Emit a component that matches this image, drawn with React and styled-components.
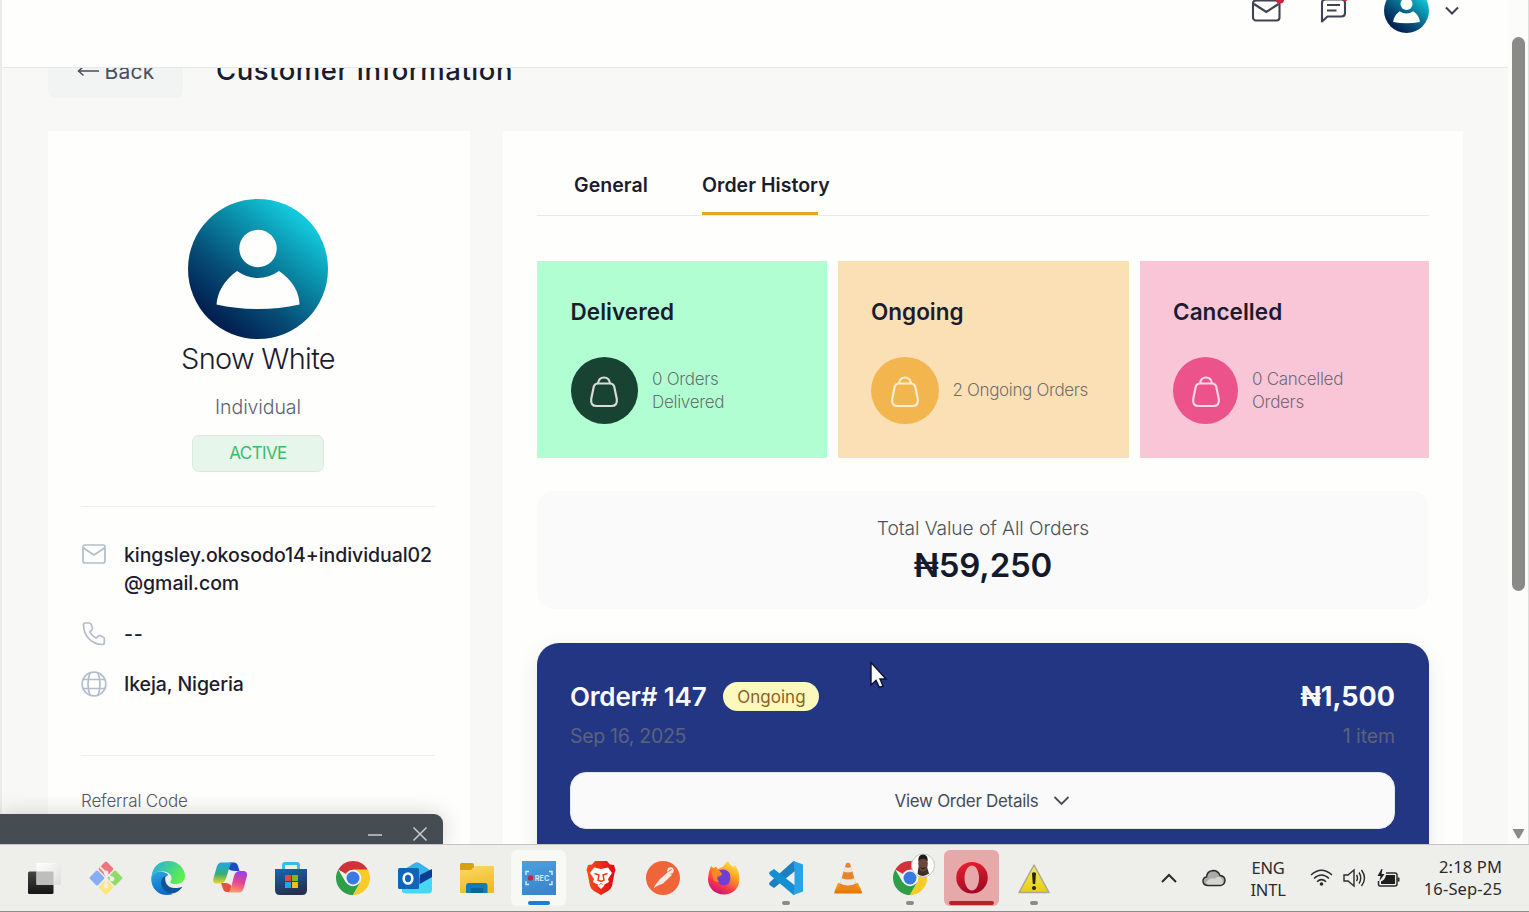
import React from "react";
import styled, { createGlobalStyle } from "styled-components";

const Global = createGlobalStyle`
  * { box-sizing: border-box; }
  body { margin: 0; font-family: Inter, "Noto Sans", sans-serif; color: #1b1c2e; }
  p, h1, h2, h3 { margin: 0; }
  svg { display: block; flex: none; }
`;

const Screen = styled.div`
  position: relative;
  display: flex;
  flex-direction: column;
  width: 1529px;
  height: 912px;
  overflow: hidden;
  background: #fefefc;
`;
const Browser = styled.div`
  display: flex;
  height: 844px;
`;
const Page = styled.div`
  display: flex;
  flex-direction: column;
  width: 1508px;
  border-left: 2px solid #ebebe9;
  background: #f8f8f6;
  overflow: hidden;
`;
const Header = styled.header`
  flex: none;
  display: flex;
  justify-content: flex-end;
  height: 68px;
  padding-right: 48px;
  background: #fefefc;
  border-bottom: 1px solid #e7e8ec;
  overflow: hidden;
`;
const HeaderTools = styled.div`
  display: flex;
  align-items: center;
  height: 44px;
  margin-top: -11px;
`;
const ToolSlot = styled.div`
  margin-right: ${(p) => p.$gap}px;
  margin-bottom: ${(p) => p.$lift || 0}px;
`;
const Main = styled.main`
  flex: 1;
  min-height: 0;
  padding: 0 45px 0 46px;
  overflow: hidden;
`;
const TitleRow = styled.div`
  display: flex;
  align-items: center;
  gap: 33px;
  height: 56px;
  margin: -26px 0 33px;
`;
const BackButton = styled.button`
  display: flex;
  align-items: center;
  justify-content: center;
  gap: 5px;
  width: 135px;
  height: 56px;
  padding-top: 3px;
  border: 0;
  border-radius: 7px;
  background: #f2f3f3;
  color: #4a4e5e;
  font: 400 21px Inter, sans-serif;
  letter-spacing: ${(p) => p.$ls}px;
`;
const Title = styled.h1`
  font-size: 27.5px;
  font-weight: 500;
  letter-spacing: ${(p) => p.$ls}px;
  white-space: nowrap;
`;
const Columns = styled.div`
  display: flex;
  gap: 33px;
`;
const ProfileCard = styled.section`
  display: flex;
  flex-direction: column;
  align-items: center;
  width: 422px;
  height: 800px;
  padding: 68px 35px 0 33px;
  background: #fefefc;
`;
const Name = styled.h2`
  height: 40px;
  line-height: 40px;
  font-size: 29px;
  font-weight: 300;
  letter-spacing: ${(p) => p.$ls}px;
`;
const Kind = styled.p`
  margin-top: 14px;
  line-height: 28px;
  font-size: 19.5px;
  font-weight: 300;
  color: #5d6270;
  letter-spacing: ${(p) => p.$ls}px;
`;
const Status = styled.div`
  display: flex;
  align-items: center;
  justify-content: center;
  width: 132px;
  height: 37px;
  margin-top: 14px;
  padding-bottom: 1px;
  border: 1px solid #dfe7df;
  border-radius: 7px;
  background: #e6f6eb;
  color: #3dbb6e;
  font-size: 17px;
  font-weight: 400;
  letter-spacing: ${(p) => p.$ls}px;
`;
const Divider = styled.hr`
  width: 100%;
  height: 1px;
  margin: ${(p) => p.$top}px 0 0;
  border: 0;
  background: #eeeff0;
`;
const Contact = styled.div`
  display: flex;
  width: 100%;
  gap: 17px;
  margin-top: ${(p) => p.$top}px;
`;
const ContactIcon = styled.div`
  display: flex;
  align-items: center;
  width: 26px;
  height: 28px;
  margin-top: ${(p) => p.$top || 0}px;
`;
const ContactText = styled.p`
  line-height: 28px;
  font-size: 19.5px;
  font-weight: 500;
  letter-spacing: ${(p) => p.$ls}px;
  white-space: nowrap;
`;
const Referral = styled.p`
  align-self: flex-start;
  margin-top: 32px;
  line-height: 26px;
  font-size: 17px;
  font-weight: 300;
  color: #555963;
  letter-spacing: ${(p) => p.$ls}px;
`;
const OrdersCard = styled.section`
  width: 960px;
  height: 800px;
  padding: 29px 34px 0;
  background: #fefefc;
`;
const Tabs = styled.nav`
  display: flex;
  gap: 12px;
  height: 56px;
  padding-left: 37px;
  border-bottom: 1px solid #e9eaea;
`;
const Tab = styled.div`
  width: 116px;
  height: 55px;
  line-height: 51px;
  font-size: 19.5px;
  font-weight: 600;
  letter-spacing: ${(p) => p.$ls}px;
  white-space: nowrap;
  border-bottom: 3px solid ${(p) => (p.$active ? "#e3a61f" : "transparent")};
`;
const Stats = styled.div`
  display: flex;
  gap: 11px;
  margin-top: 45px;
`;
const Stat = styled.article`
  width: ${(p) => p.$w}px;
  height: 197px;
  padding: 36px 0 0 33.5px;
  background: ${(p) => p.$bg};
`;
const StatTitle = styled.h3`
  line-height: 30px;
  font-size: 22.5px;
  font-weight: 600;
  letter-spacing: ${(p) => p.$ls}px;
`;
const StatBody = styled.div`
  display: flex;
  align-items: center;
  gap: 14px;
  margin-top: 30px;
`;
const BagDisc = styled.div`
  display: flex;
  align-items: center;
  justify-content: center;
  width: ${(p) => p.$w}px;
  height: 67px;
  padding-top: 2px;
  border-radius: 50%;
  background: ${(p) => p.$bg};
`;
const StatText = styled.p`
  line-height: 22.5px;
  font-size: 17px;
  font-weight: 300;
  color: #4b4f57cc;
  letter-spacing: ${(p) => p.$ls}px;
  white-space: pre-line;
`;
const Total = styled.div`
  display: flex;
  flex-direction: column;
  align-items: center;
  height: 118px;
  margin-top: 33px;
  padding-top: 23px;
  border-radius: 17px;
  background: #fafafb;
`;
const TotalLabel = styled.p`
  line-height: 28px;
  font-size: 19.2px;
  font-weight: 300;
  color: #4c525c;
  letter-spacing: ${(p) => p.$ls}px;
`;
const TotalValue = styled.p`
  line-height: 46px;
  font-size: 33px;
  font-weight: 600;
  color: #141a2b;
  letter-spacing: ${(p) => p.$ls}px;
`;
const Order = styled.article`
  height: 300px;
  margin-top: 34px;
  padding: 34px 34px 0 33px;
  border-radius: 22px;
  background: #233684;
  box-shadow: 0 6px 20px rgba(60, 60, 60, 0.1);
`;
const OrderRow = styled.div`
  display: flex;
  align-items: center;
  height: ${(p) => p.$h}px;
`;
const OrderName = styled.h3`
  font-size: 26px;
  font-weight: 600;
  color: #fafafd;
  letter-spacing: ${(p) => p.$ls}px;
`;
const Pill = styled.span`
  display: flex;
  align-items: center;
  justify-content: center;
  width: 96px;
  height: 29px;
  margin-left: 17px;
  border-radius: 15px;
  background: #fcf8be;
  color: #8a6420;
  font-size: 17px;
  letter-spacing: ${(p) => p.$ls}px;
`;
const Price = styled.span`
  margin-left: auto;
  color: #fafafd;
  font-size: 27px;
  font-weight: 700;
  letter-spacing: ${(p) => p.$ls}px;
`;
const Muted = styled.span`
  margin-left: ${(p) => (p.$end ? "auto" : 0)};
  color: #5a627c;
  font-size: 19.5px;
  font-weight: 400;
  letter-spacing: ${(p) => p.$ls}px;
`;
const DetailsButton = styled.button`
  display: flex;
  align-items: center;
  justify-content: center;
  gap: 15px;
  width: 100%;
  height: 57px;
  margin-top: 16px;
  border: 1px solid #e5e7ef;
  border-radius: 16px;
  background: #fafafb;
  color: #474b55;
  font: 400 17px Inter, sans-serif;
  letter-spacing: ${(p) => p.$ls}px;
`;
const Scrollbar = styled.div`
  display: flex;
  flex-direction: column;
  align-items: center;
  width: 21px;
  padding: 37px 0 5px;
  background: #fcfcfa;
  border-right: 1px solid #dededc;
`;
const Thumb = styled.div`
  width: 13px;
  height: 554px;
  margin-bottom: auto;
  border-radius: 7px;
  background: #8a8b86;
`;
const Popup = styled.div`
  position: absolute;
  left: 0;
  top: 814px;
  display: flex;
  justify-content: flex-end;
  width: 443px;
  height: 30px;
  padding: 12px 15px 0 0;
  gap: 29px;
  border-top-right-radius: 9px;
  background: #454d52;
  box-shadow: 0 0 22px rgba(0, 0, 0, 0.18);
`;
const Cursor = styled.svg`
  position: absolute;
  left: 868px;
  top: 660px;
`;
const Taskbar = styled.footer`
  position: relative;
  display: flex;
  height: 68px;
  padding-left: 13px;
  border-top: 1px solid #c3c3c1;
  border-bottom: 1px solid #8b8b88;
  background: #eeeeeb;
`;
const Slot = styled.div`
  display: flex;
  flex-direction: column;
  align-items: center;
  width: 61.87px;
  padding-top: 5px;
`;
const Tile = styled.div`
  display: flex;
  flex-direction: column;
  align-items: center;
  justify-content: space-between;
  width: 55px;
  height: 56px;
  padding: 11px 0 1px;
  border-radius: 6px;
  background: ${(p) => p.$bg || "transparent"};
`;
const Mark = styled.div`
  width: ${(p) => p.$w}px;
  height: 4px;
  border-radius: 2px;
  background: ${(p) => p.$c};
`;
const Tray = styled.div`
  display: flex;
  align-items: center;
  margin-left: auto;
  padding: 0 27px 0 0;
  height: 66px;
  color: #2b2b2b;
  font-family: "Noto Sans", sans-serif;
  font-size: 16.5px;
  line-height: 22.5px;
`;
const TrayItem = styled.div`
  width: ${(p) => p.$w}px;
  margin-right: ${(p) => p.$gap}px;
  padding-top: ${(p) => p.$drop || 0}px;
  text-align: ${(p) => p.$align || "center"};
  letter-spacing: ${(p) => p.$ls || 0}px;
  white-space: nowrap;
`;

const Avatar = ({ size, id }) => (
  <svg width={size} height={size} viewBox="0 0 140 140">
    <defs>
      <linearGradient id={id} x1="0.2" y1="0.87" x2="0.8" y2="0.13">
        <stop offset="0" stopColor="#021f50" />
        <stop offset="0.35" stopColor="#065079" />
        <stop offset="0.75" stopColor="#0b9ab3" />
        <stop offset="1" stopColor="#14c8dc" />
      </linearGradient>
    </defs>
    <circle cx="70" cy="70" r="70" fill={`url(#${id})`} />
    <circle cx="70" cy="49.500" r="18.700" fill="#fefefc" />
    <path d="M49 72Q59 79 70 79T91 72Q111 86 111.500 105.500Q91 110 70 110T28.500 105.500Q30 86 49 72Z" fill="#fefefc" />
  </svg>
);

const Bag = ({ color }) => (
  <svg width="30" height="34" viewBox="0 0 30 34" fill="none" stroke={color} strokeWidth="2.2">
    <path d="M9 8.500H21Q24.300 8.500 25.200 11.500L27.800 24Q28.600 31 22.500 31H7.500Q1.400 31 2.200 24L4.800 11.500Q5.700 8.500 9 8.500Z" />
    <path d="M9 8.500C9.500 4.500 12 2.500 15 2.500S20.500 4.500 21 8.500" />
  </svg>
);

const ChromeIcon = () => (
  <>
    <path d="M17 17L2.300 8.500A17 17 0 0 1 31.700 8.500Z" fill="#d3303a" />
    <path d="M2.300 8.500A17 17 0 0 0 17 34L24.300 21.200L9.700 21.200Z" fill="#2f9e49" />
    <path d="M31.700 8.500A17 17 0 0 1 17 34L24.500 21L17 8.500Z" fill="#f8cb28" />
    <circle cx="17" cy="17" r="8.300" fill="#f5f5f3" />
    <circle cx="17" cy="17" r="6.500" fill="#3a78e3" />
  </>
);

const grad = (id, from, to, x2 = 1, y2 = 1) => (
  <linearGradient id={id} x1="0" y1="0" x2={x2} y2={y2}>
    <stop offset="0" stopColor={from} />
    <stop offset="1" stopColor={to} />
  </linearGradient>
);

const apps = [
  {
    art: (
      <>
        <defs>{grad("tv", "#454545", "#151515", 0)}{grad("tw", "#ffffff", "#dededc", 1)}</defs>
        <rect x="1" y="10.500" width="25.500" height="22.500" rx="1.500" fill="url(#tv)" />
        <rect x="9.500" y="2" width="24.500" height="22" rx="1" fill="url(#tw)" />
        <path d="M9.500 10.500H26.500V24H9.500Z" fill="#bebebc" />
      </>
    ),
  },
  {
    art: (
      <>
        <g transform="rotate(45 17 17)">
          <rect x="5" y="5" width="11.300" height="11.300" rx="1.500" fill="#f07480" />
          <rect x="17.700" y="5" width="11.300" height="11.300" rx="1.500" fill="#90dc68" />
          <rect x="5" y="17.700" width="11.300" height="11.300" rx="1.500" fill="#86aef5" />
          <rect x="17.700" y="17.700" width="11.300" height="11.300" rx="1.500" fill="#fbe680" />
        </g>
        <path d="M11 6L17 12V27M17 12L24 18" stroke="#eeeeeb" strokeWidth="2" fill="none" />
        <circle cx="17" cy="12" r="2.400" fill="#eeeeeb" />
        <circle cx="17" cy="25" r="2.400" fill="#eeeeeb" />
        <circle cx="23" cy="18" r="2.400" fill="#eeeeeb" />
      </>
    ),
  },
  {
    art: (
      <>
        <defs>{grad("eg", "#25a9e8", "#5cf04c", 1, 0.5)}{grad("eb", "#2ba8e4", "#0c6cc4", 0.3)}</defs>
        <path d="M0.500 15C2 5 9 0 17 0C28 0 34 8 34 15C34 21 29 23 24 23C20 23 18.500 21.500 20 19.500C22 16 19 11 13 10.500C7 10 3 12 0.500 15Z" fill="url(#eg)" />
        <path d="M0.300 16C2 12 7 10 12 11C17 12 18 14 16 15C10 17 9 25 16 30C19 32 22 33 22 33C12 37 -1 30 0.300 16Z" fill="url(#eb)" />
        <path d="M14.500 15C8 18 9 26 15 30.500C21 35 28 31 31.500 25.500C26 28 18 28 15 22C14 19 14 17 14.500 15Z" fill="#10539a" />
      </>
    ),
  },
  {
    art: (
      <>
        <defs>
          <linearGradient id="c1" x1="0" y1="0" x2="0" y2="1"><stop offset="0" stopColor="#21a5e8" /><stop offset="0.550" stopColor="#35ae78" /><stop offset="1" stopColor="#f2d41e" /></linearGradient>
          <linearGradient id="c2" x1="0.500" y1="0" x2="0.300" y2="1"><stop offset="0" stopColor="#9b3fe8" /><stop offset="0.500" stopColor="#e64691" /><stop offset="1" stopColor="#f9a065" /></linearGradient>
        </defs>
        <path d="M16 1.500H21Q24 1.500 25 5L26.500 10H22Q18 10 15.500 8Z" fill="#1c49c5" />
        <path d="M8 22H13Q16 22 18.500 25L17 31H14Q11 31 10 28Z" fill="#e6503f" />
        <path d="M8 1.500H20Q17.500 2 16.500 6L13 17.500Q11.500 22.500 7 22.500H3Q-0.300 22 0.300 18L4 5Q5.500 1.500 8 1.500Z" fill="url(#c1)" />
        <path d="M26 31.500H14.500Q17 31 18 27L21 15Q22.500 10 27 10H31Q34.500 10.500 34 14.500L30.500 28Q29 31.500 26 31.500Z" fill="url(#c2)" />
      </>
    ),
  },
  {
    art: (
      <>
        <defs>{grad("st", "#1268b4", "#273052", 0.3)}</defs>
        <path d="M9.500 9V4Q9.500 2.500 11 2.500H23Q24.500 2.500 24.500 4V9" stroke="#35bde6" strokeWidth="2.800" fill="none" />
        <path d="M1 8H33V29Q33 34 28 34H6Q1 34 1 29Z" fill="url(#st)" />
        <rect x="11" y="14" width="6" height="6" fill="#e5492e" />
        <rect x="18" y="14" width="6" height="6" fill="#7dbb1d" />
        <rect x="11" y="21" width="6" height="6" fill="#24a5ea" />
        <rect x="18" y="21" width="6" height="6" fill="#f8bc15" />
      </>
    ),
  },
  { art: <ChromeIcon /> },
  {
    art: (
      <>
        <path d="M4 10L17 2Q19 1 21 2L33 10V29Q33 32 30 32H8Q4 32 4 29Z" fill="#1a8bd4" />
        <path d="M17 2Q19 1 21 2L33 10L22 17L9 7Z" fill="#35b5ea" />
        <path d="M22 14L34 8V17L22 24Z" fill="#0a3f94" />
        <path d="M34 16V29Q34 32.500 30 32.500H8Q4 32 4 28L20 24Z" fill="#45d7f4" />
        <rect x="0" y="7" width="21" height="21" rx="1.500" fill="#0f65b7" />
        <ellipse cx="10" cy="17.500" rx="4.300" ry="5" fill="none" stroke="#f5f8fb" strokeWidth="2.600" />
      </>
    ),
  },
  {
    art: (
      <>
        <defs>{grad("fd", "#fbd967", "#f0bb26", 0.3)}</defs>
        <path d="M0 3.500Q0 2 1.500 2H12Q14 2 14 4V9H0Z" fill="#d4a10f" />
        <path d="M0 9H11L15 5H33Q34 5 34 6.500V31Q34 32 33 32H1Q0 32 0 31Z" fill="url(#fd)" />
        <path d="M6 32V25Q6 22 9 22H25Q27.500 22 27.500 25V32Z" fill="#137bb5" />
        <path d="M11 27H23V32H11Z" fill="#0c6498" />
      </>
    ),
  },
  {
    bg: "#f8f8f5",
    mark: [22, "#1a7fd0"],
    art: (
      <>
        <defs>{grad("rc", "#4ba1e0", "#3b86cc", 0.3)}</defs>
        <rect width="34" height="34" fill="url(#rc)" />
        <path d="M7 10.500H4V14M27 10.500H30V14M7 23.500H4V20M27 23.500H30V20" fill="none" stroke="#d9eaf8" strokeWidth="1.400" />
        <circle cx="8.500" cy="17" r="2.700" fill="#c62640" />
        <text x="12.800" y="19.600" fontSize="7.200" fontWeight="700" fill="#d6e8f7" fontFamily="Inter, sans-serif">REC</text>
      </>
    ),
  },
  {
    art: (
      <>
        <defs>{grad("br", "#f4511e", "#e30613", 1, 0)}</defs>
        <path d="M11 0H23L26 3.500L30 4L31.500 9L30.500 12L28 25Q27 28 24 30L17 34L10 30Q7 28 6 25L3.500 12L2.500 9L4 4L8 3.500Z" fill="url(#br)" />
        <path d="M10 6.500L17 8L24 6.500L28 12L24 18L25 21L19.500 24L17 22L14.500 24L9 21L10 18L6 12Z" fill="#fff" />
        <path d="M13.500 24.500L17 23L20.500 24.500L17 28Z" fill="#fff" />
        <path d="M10.500 12.500L15 14L14 19L17 20.500L20 19L19 14L23.500 12.500" stroke="#ec3b18" strokeWidth="1.500" fill="none" />
      </>
    ),
  },
  {
    art: (
      <>
        <circle cx="17" cy="17" r="17" fill="#f0643a" />
        <circle cx="24.500" cy="9.500" r="3.200" fill="#f8e9e1" />
        <path d="M22 11L26 14L17 22.500L11 25L7.500 27.500L10 23L14 18Z" fill="#f8e9e1" />
        <path d="M22.500 10.500L25.500 8.500" stroke="#f0643a" strokeWidth="1" />
      </>
    ),
  },
  {
    art: (
      <>
        <defs>
          <linearGradient id="ff" x1="0.850" y1="0" x2="0.300" y2="1"><stop offset="0" stopColor="#fff04a" /><stop offset="0.400" stopColor="#ff9c22" /><stop offset="0.750" stopColor="#f8334c" /><stop offset="1" stopColor="#c8107f" /></linearGradient>
        </defs>
        <path d="M4 5L6.500 7L9 5.500L11 8L16 5.500L19 2L21 0Q22 3 26 6L28 4Q33 11 32.500 19C32 28 25 33.500 17 33.500C8 33.500 1 27 1 18Q1 11 4 5Z" fill="url(#ff)" />
        <path d="M12 9Q20 7 23 13Q25 23 18 24.500Q11 24.500 9.500 17L15 14Z" fill="#6e3fd2" />
        <path d="M5 10Q12 7 15 13L10 15Q10 19 12 21Q7 21 6 18Z" fill="#ff8a24" />
      </>
    ),
  },
  {
    mark: [8, "#8b8b88"],
    art: (
      <>
        <path d="M24.500 0L26 1V10L5 27L0.500 24Q-0.500 22.500 1 21Z" fill="#1c7fbe" />
        <path d="M24.500 34L26 33V24.500L5 8L0.500 11Q-0.500 12.500 1 14Z" fill="#148fd3" />
        <path d="M24.500 0L34 3.500V30.500L24.500 34L25.500 24V10Z" fill="#2aa2e8" />
      </>
    ),
  },
  {
    art: (
      <>
        <defs>{grad("vl", "#fba31b", "#e07400", 0)}</defs>
        <path d="M7 22H27L31 31Q31 32.500 30 32.500H4Q3 32.500 3.300 31Z" fill="url(#vl)" />
        <path d="M15 2.500Q17 1 19 2.500L26 26Q17 30 8 26Z" fill="#e8832a" />
        <path d="M14 6L12.700 10.500Q17 12.500 21.300 10.500L20 6Q17 7.500 14 6Z" fill="#e9e9e7" />
        <path d="M10.700 17L9 22.500Q17 26.500 25 22.500L23.300 17Q17 20 10.700 17Z" fill="#e9e9e7" />
      </>
    ),
  },
  {
    mark: [8, "#8b8b88"],
    art: (
      <>
        <ChromeIcon />
        <circle cx="30" cy="4.500" r="11.500" fill="#fbfbfa" stroke="#c6c6c4" />
        <path d="M25.500 6L34 6L36 12.500Q30 17 24.500 13Z" fill="#3c302c" />
        <ellipse cx="30" cy="2.500" rx="4.800" ry="8" fill="#6b463a" />
        <path d="M25.300 0Q25 -6.500 30 -6.500T34.700 0Q30 -4.500 25.300 0Z" fill="#1d1917" />
        <path d="M27.500 6.500Q30 9.500 32.500 6.500" stroke="#261612" fill="none" />
      </>
    ),
  },
  {
    bg: "#e6a8a9",
    mark: [45, "#bd1f26"],
    art: (
      <>
        <defs>{grad("op", "#f0202e", "#a50a25", 0.3)}</defs>
        <path fillRule="evenodd" d="M17 1A15.700 15.700 0 1 0 17 32.500A15.700 15.700 0 1 0 17 1ZM17 4.500C21 4.500 24 10 24 17S21 29.500 17 29.500S9.500 24 9.500 17S13 4.500 17 4.500Z" fill="url(#op)" />
      </>
    ),
  },
  {
    mark: [8, "#8b8b88"],
    art: (
      <>
        <defs>{grad("wn", "#f6ea5a", "#e8cd10", 0)}</defs>
        <path d="M17 4L32 31.500H2Z" fill="url(#wn)" stroke="#a9a795" strokeWidth="1.500" strokeLinejoin="round" />
        <path d="M15 12Q17 10.500 19 12L18.200 23H15.800Z" fill="#23230f" />
        <circle cx="17" cy="27" r="2" fill="#23230f" />
      </>
    ),
  },
];

const stats = [
  { title: "Delivered", text: "0 Orders\nDelivered", bg: "#b2fed3", disc: "#184332", bag: "#d8dbd6", w: 289.5, dw: 67.5, ls: 0.05, tls: -0.3 },
  { title: "Ongoing", text: "2 Ongoing Orders", bg: "#fbe0b5", disc: "#f3b64e", bag: "#fcecd2", w: 291, dw: 67.5, ls: 0, tls: -0.35 },
  { title: "Cancelled", text: "0 Cancelled\nOrders", bg: "#f9c6d7", disc: "#ec538a", bag: "#fbd9e4", w: 289.5, dw: 65, ls: 0.05, tls: -0.3 },
];

export default function App() {
  return (
    <Screen>
      <Global />
      <Browser>
        <Page>
          <Header>
            <HeaderTools>
              <ToolSlot $gap={35}>
                <svg width="34" height="34" viewBox="0 0 34 34" fill="none" stroke="#3f4250" strokeWidth="2.1">
                  <rect x="3" y="6.500" width="26.500" height="20" rx="3" />
                  <path d="M4 10L16.300 18L28.500 10" />
                  <circle cx="30" cy="5" r="4.500" fill="#d81f3c" stroke="none" />
                </svg>
              </ToolSlot>
              <ToolSlot $gap={35}>
                <svg width="30" height="34" viewBox="0 0 30 34" fill="none" stroke="#3f4250" strokeWidth="2.1">
                  <path d="M3 27.500V9Q3 5.500 6.500 5.500H22.500Q26 5.500 26 9V19Q26 22.500 22.500 22.500H8.500Z" strokeLinejoin="round" />
                  <path d="M8 11H21M8 16.500H17.500" />
                  <circle cx="26" cy="2.500" r="4.500" fill="#d81f3c" stroke="none" />
                </svg>
              </ToolSlot>
              <ToolSlot $gap={15} $lift={2}><Avatar size={45} id="avatarSmall" /></ToolSlot>
              <svg width="16" height="12" viewBox="0 0 16 12" fill="none" stroke="#3f4250" strokeWidth="2">
                <path d="M2 2.500L8 8.500L14 2.500" />
              </svg>
            </HeaderTools>
          </Header>
          <Main>
            <TitleRow>
              <BackButton $ls={0.2}>
                <svg width="23" height="14" viewBox="0 0 23 14" fill="none" stroke="#4a4e5e" strokeWidth="1.500">
                  <path d="M22 7H1.500M6.500 2.500L1.500 7L6.500 11.500" />
                </svg>
                Back
              </BackButton>
              <Title $ls={0.52}>Customer Information</Title>
            </TitleRow>
            <Columns>
              <ProfileCard>
                <Avatar size={140} id="avatarLarge" />
                <Name $ls={-0.7}>Snow White</Name>
                <Kind $ls={-0.1}>Individual</Kind>
                <Status $ls={-0.6}>ACTIVE</Status>
                <Divider $top={34} />
                <Contact $top={34}>
                  <ContactIcon $top={-1}>
                    <svg width="26" height="22" viewBox="0 0 26 22" fill="none" stroke="#b3bdcb" strokeWidth="1.700">
                      <rect x="2" y="2" width="22" height="18" rx="2" />
                      <path d="M2.500 5L13 12L23.500 5" />
                    </svg>
                  </ContactIcon>
                  <ContactText $ls={-0.06}>kingsley.okosodo14+individual02<br />@gmail.com</ContactText>
                </Contact>
                <Contact $top={23}>
                  <ContactIcon>
                    <svg width="26" height="26" viewBox="0 0 26 26" fill="none" stroke="#b3bdcb" strokeWidth="1.700" strokeLinejoin="round">
                      <path d="M4 2H8.500Q9.500 2 10 3.200L11.500 7Q11.700 8 11 8.700L8.800 10.800Q11 15 15.200 17.200L17.300 15Q18 14.300 19 14.600L22 16Q23.300 16.500 23.300 17.500V21.500Q23.300 23.500 21.500 23.500C11 23.500 2.500 15 2.500 4Q2.500 2 4 2Z" />
                    </svg>
                  </ContactIcon>
                  <ContactText $ls={0.8}>--</ContactText>
                </Contact>
                <Contact $top={22}>
                  <ContactIcon>
                    <svg width="26" height="26" viewBox="0 0 26 26" fill="none" stroke="#b3bdcb" strokeWidth="1.700">
                      <circle cx="13" cy="13" r="11.800" />
                      <path d="M9 1.500Q5 13 9 24.500M17 1.500Q21 13 17 24.500M1.500 8.500H24.500M1.500 17.500H24.500" />
                    </svg>
                  </ContactIcon>
                  <ContactText $ls={-0.1}>Ikeja, Nigeria</ContactText>
                </Contact>
                <Divider $top={57} />
                <Referral $ls={-0.15}>Referral Code</Referral>
              </ProfileCard>
              <OrdersCard>
                <Tabs>
                  <Tab $ls={0.05}>General</Tab>
                  <Tab $active $ls={0.05}>Order History</Tab>
                </Tabs>
                <Stats>
                  {stats.map((s) => (
                    <Stat key={s.title} $w={s.w} $bg={s.bg}>
                      <StatTitle $ls={s.ls}>{s.title}</StatTitle>
                      <StatBody>
                        <BagDisc $w={s.dw} $bg={s.disc}><Bag color={s.bag} /></BagDisc>
                        <StatText $ls={s.tls}>{s.text}</StatText>
                      </StatBody>
                    </Stat>
                  ))}
                </Stats>
                <Total>
                  <TotalLabel $ls={-0.08}>Total Value of All Orders</TotalLabel>
                  <TotalValue $ls={-0.2}>₦59,250</TotalValue>
                </Total>
                <Order>
                  <OrderRow $h={39}>
                    <OrderName $ls={-0.18}>Order# 147</OrderName>
                    <Pill $ls={0}>Ongoing</Pill>
                    <Price $ls={0}>₦1,500</Price>
                  </OrderRow>
                  <OrderRow $h={40}>
                    <Muted $ls={-0.3}>Sep 16, 2025</Muted>
                    <Muted $end $ls={-0.1}>1 item</Muted>
                  </OrderRow>
                  <DetailsButton $ls={-0.3}>
                    View Order Details
                    <svg width="17" height="12" viewBox="0 0 17 12" fill="none" stroke="#474b55" strokeWidth="1.800">
                      <path d="M1.500 2L8.500 9L15.500 2" />
                    </svg>
                  </DetailsButton>
                </Order>
              </OrdersCard>
            </Columns>
          </Main>
        </Page>
        <Scrollbar>
          <Thumb />
          <svg width="13" height="10" viewBox="0 0 13 10"><path d="M0.500 0H12.500L7.500 9Q6.500 10 5.500 9Z" fill="#8a8b86" /></svg>
        </Scrollbar>
      </Browser>
      <Popup>
        <svg width="16" height="16" viewBox="0 0 16 16" stroke="#c9cccd" strokeWidth="1.500"><path d="M1 9H15" /></svg>
        <svg width="16" height="16" viewBox="0 0 16 16" stroke="#c9cccd" strokeWidth="1.500"><path d="M1.500 1.500L14.500 14.500M14.500 1.500L1.500 14.500" /></svg>
      </Popup>
      <Cursor width="20" height="30" viewBox="0 0 20 30">
        <path d="M3 2.500V25L8 20.500L11.500 27.500L15 26L12 19H18Z" fill="#fdfdfd" stroke="#0d1030" strokeWidth="1.400" />
      </Cursor>
      <Taskbar>
        {apps.map((a, i) => (
          <Slot key={i}>
            <Tile $bg={a.bg}>
              <svg width="34" height="34" viewBox="0 0 34 34" overflow="visible">{a.art}</svg>
              {a.mark && <Mark $w={a.mark[0]} $c={a.mark[1]} />}
            </Tile>
          </Slot>
        ))}
        <Tray>
          <TrayItem $w={16} $gap={25}>
            <svg width="16" height="10" viewBox="0 0 16 10" fill="none" stroke="#2b2b2b" strokeWidth="2"><path d="M1 9L8 2L15 9" /></svg>
          </TrayItem>
          <TrayItem $w={24} $gap={24}>
            <svg width="24" height="18" viewBox="0 0 24 18" fill="#aaaaa9" stroke="#2b2b2b" strokeWidth="1.500">
              <path d="M5.500 16.500Q1 16 1 12Q1 8.500 4.500 8Q5 2 11 1.500Q16 1.500 18 6.500Q23 7 23 11.500Q22.500 16 18.500 16.500Z" />
              <path d="M4 14Q7 8 13 9.500Q17 6 20 10L21 14Q20 15.500 18 15.500H6Z" fill="#d4d4d3" stroke="none" />
            </svg>
          </TrayItem>
          <TrayItem $w={36} $gap={24} $ls={-0.2} $drop={2}>ENG<br />INTL</TrayItem>
          <TrayItem $w={23} $gap={10}>
            <svg width="23" height="18" viewBox="0 0 23 18" fill="none" stroke="#2b2b2b" strokeWidth="1.500">
              <path d="M1 6Q11.500 -3.500 22 6M4 9.500Q11.500 2.500 19 9.500M7 12.800Q11.500 8.500 16 12.800" />
              <circle cx="11.500" cy="15" r="1.800" fill="#2b2b2b" stroke="none" />
            </svg>
          </TrayItem>
          <TrayItem $w={23} $gap={11}>
            <svg width="23" height="20" viewBox="0 0 23 20" fill="none" stroke="#2b2b2b" strokeWidth="1.400">
              <path d="M1 7H5L11 2V18L5 13H1Z" />
              <path d="M13.500 7Q15.500 10 13.500 13M16 4.500Q19.500 10 16 15.500M18.500 2Q24.500 10 18.500 18" />
            </svg>
          </TrayItem>
          <TrayItem $w={23} $gap={23}>
            <svg width="23" height="19" viewBox="0 0 23 19" fill="none" stroke="#2b2b2b" strokeWidth="1.500">
              <path d="M9 4H18Q20 4 20 6V15Q20 17 18 17H3Q1.500 17 1.500 15V12" />
              <path d="M9 6H18V15H4V12.500Q8 11 9 6Z" fill="#1d1d1d" stroke="none" />
              <path d="M20.500 8.500H22.500V12.500H20.500Z" fill="#2b2b2b" stroke="none" />
              <path d="M4.500 0L0.500 7H3.500L2.500 12L7.500 5H4.500L5.500 0Z" fill="#1d1d1d" stroke="none" />
            </svg>
          </TrayItem>
          <TrayItem $w={79} $gap={0} $align="right" $ls={0.15}>2:18 PM<br />16-Sep-25</TrayItem>
        </Tray>
      </Taskbar>
    </Screen>
  );
}
